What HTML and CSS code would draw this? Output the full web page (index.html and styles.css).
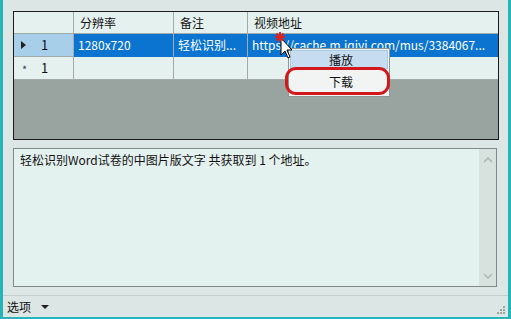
FILE: index.html
```html
<!DOCTYPE html>
<html lang="zh">
<head>
  <meta charset="UTF-8" />
  <title>视频地址</title>
  <link rel="stylesheet" href="styles.css">
</head>
<body>
  <div class="window">
    <div class="grid">
      <div class="row head">
        <div class="cell rh"></div>
        <div class="cell c1">分辨率</div>
        <div class="cell c2">备注</div>
        <div class="cell c3">视频地址</div>
      </div>
      <div class="row selected">
        <div class="cell rh"><span class="mark tri"></span><span class="num">1</span></div>
        <div class="cell c1">1280x720</div>
        <div class="cell c2">轻松识别...</div>
        <div class="cell c3">https://cache.m.iqiyi.com/mus/3384067...</div>
      </div>
      <div class="row">
        <div class="cell rh"><span class="mark star">*</span><span class="num">1</span></div>
        <div class="cell c1"></div>
        <div class="cell c2"></div>
        <div class="cell c3"></div>
      </div>
      <div class="empty"></div>
    </div>

    <div class="log">
      <div class="log-text">轻松识别Word试卷的中图片版文字 共获取到 1 个地址。</div>
      <div class="scroll">
        <svg width="10" height="6" viewBox="0 0 10 6"><path d="M1 5 L5 1 L9 5" fill="none" stroke="#a9b3b1" stroke-width="1.4"/></svg>
        <svg width="10" height="6" viewBox="0 0 10 6"><path d="M1 1 L5 5 L9 1" fill="none" stroke="#a9b3b1" stroke-width="1.4"/></svg>
      </div>
    </div>

    <div class="status">
      <span class="options">选项</span>
      <span class="drop"></span>
      <svg class="grip" width="9" height="9" viewBox="0 0 9 9">
        <rect x="6" y="0" width="2" height="2" fill="#9aa4a2"/>
        <rect x="3" y="3" width="2" height="2" fill="#9aa4a2"/>
        <rect x="6" y="3" width="2" height="2" fill="#9aa4a2"/>
        <rect x="0" y="6" width="2" height="2" fill="#9aa4a2"/>
        <rect x="3" y="6" width="2" height="2" fill="#9aa4a2"/>
        <rect x="6" y="6" width="2" height="2" fill="#9aa4a2"/>
      </svg>
    </div>

    <div class="menu">
      <div class="item hover">播放</div>
      <div class="item">下载</div>
    </div>
    <div class="ring"></div>

    <svg class="cursor" width="16" height="24" viewBox="0 0 16 24">
      <path d="M5 2 L5 19 L9 15 L12 22 L14 21 L11 14 L16 14 Z" fill="#fff" stroke="#000" stroke-width="1"/>
    </svg>
    <svg class="spark" width="10" height="10" viewBox="0 0 10 10">
      <path d="M5 0 L5 10 M0 5 L10 5 M1.5 1.5 L8.5 8.5 M8.5 1.5 L1.5 8.5" stroke="#e0201c" stroke-width="1.8"/>
    </svg>
  </div>
</body>
</html>
```

FILE: styles.css
```css
body {
  margin: 0;
  font-family: "Noto Sans CJK SC", "Noto Sans", sans-serif;
  font-size: 12px;
  color: #111;
}
.window {
  position: relative;
  width: 505px;
  height: 317px;
  background-color: #dce6e4;
  border-left: 3px solid #27b4b8;
  border-right: 3px solid #27b4b8;
  border-bottom: 2px solid #27b4b8;
  display: flex;
  flex-direction: column;
  overflow: hidden;
}
.grid {
  margin: 11px 0 0 10px;
  width: 484px;
  height: 127px;
  border: 1px solid #1c1c1c;
  display: flex;
  flex-direction: column;
  background-color: #99a4a1;
}
.row {
  display: grid;
  grid-template-columns: 60px 100px 74px 1fr;
  height: 23px;
  background-color: #e5f1ee;
}
.row.head {
  height: 22px;
}
.cell {
  border-right: 1px solid #a3abaa;
  border-bottom: 1px solid #a3abaa;
  padding-left: 4px;
  line-height: 22px;
  white-space: nowrap;
  overflow: hidden;
}
.head .cell {
  line-height: 21px;
  padding-left: 6px;
}
.cell.c3 {
  border-right: none;
}
.rh {
  position: relative;
  padding-left: 0;
}
.selected .cell {
  background-color: #0b74d0;
  color: #fff;
  border-bottom-color: #0b74d0;
}
.selected .cell.rh {
  background-color: #a8cfea;
  color: #111;
  border-bottom-color: #a3abaa;
}
.mark {
  position: absolute;
  left: 7px;
}
.mark.tri {
  top: 7px;
  width: 0;
  height: 0;
  border-top: 4px solid transparent;
  border-bottom: 4px solid transparent;
  border-left: 5px solid #202020;
}
.mark.star {
  left: 8px;
  top: 1px;
  font-size: 11px;
  color: #444;
}
.num {
  position: absolute;
  left: 27px;
  font-size: 13px;
}
.empty {
  flex: 1;
}
.log {
  margin: 8px 0 0 10px;
  width: 482px;
  height: 137px;
  border: 1px solid #7e8a88;
  background-color: #e4f2ef;
  display: flex;
}
.log-text {
  flex: 1;
  padding: 3px 0 0 6px;
  line-height: 16px;
}
.scroll {
  width: 17px;
  background-color: #d7e2df;
  display: flex;
  flex-direction: column;
  justify-content: space-between;
  align-items: center;
  padding: 8px 0 7px;
}
.status {
  margin-top: 8px;
  border-top: 1px solid #c4cecc;
  flex: 1;
  display: flex;
  align-items: center;
  padding-left: 4px;
  position: relative;
}
.drop {
  margin-left: 10px;
  width: 0;
  height: 0;
  border-left: 4px solid transparent;
  border-right: 4px solid transparent;
  border-top: 4px solid #222;
}
.grip {
  position: absolute;
  right: 2px;
  bottom: 2px;
}
.menu {
  position: absolute;
  left: 285px;
  top: 48px;
  width: 98px;
  height: 45px;
  background-color: #f2f4f4;
  border: 1px solid #8f9696;
  padding: 1px;
}
.item {
  height: 19px;
  line-height: 19px;
  text-align: center;
  padding-left: 4px;
}
.item.hover {
  background-color: #c6ddf1;
  border: 1px solid #a9c8e6;
  height: 17px;
  line-height: 17px;
}
.item + .item {
  margin-top: 3px;
  line-height: 20px;
}
.ring {
  position: absolute;
  left: 282px;
  top: 67px;
  width: 99px;
  height: 22px;
  border: 3px solid #d3181c;
  border-radius: 11px;
}
.cursor {
  position: absolute;
  left: 273px;
  top: 36px;
}
.spark {
  position: absolute;
  left: 272px;
  top: 32px;
}
```
